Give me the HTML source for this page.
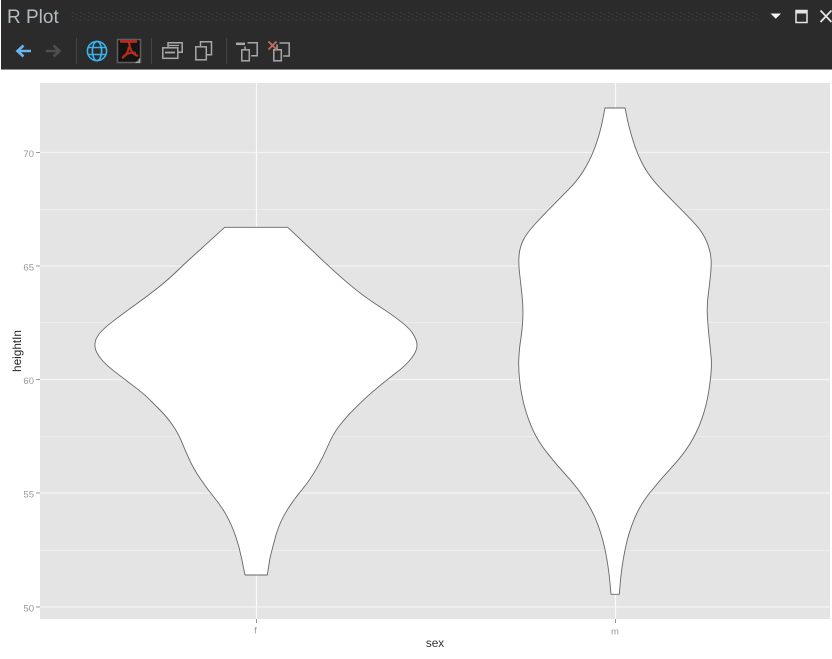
<!DOCTYPE html>
<html><head><meta charset="utf-8"><style>
html,body{margin:0;padding:0;background:#fff;width:832px;height:659px;overflow:hidden}
svg{display:block}
</style></head><body>
<svg width="832" height="659" viewBox="0 0 832 659" xmlns="http://www.w3.org/2000/svg">
<defs>
<pattern id="grip" width="8" height="4" patternUnits="userSpaceOnUse"><rect x="0" y="0" width="1" height="1" fill="#434343"/><rect x="4" y="2" width="1" height="1" fill="#434343"/><rect x="2" y="1" width="1" height="1" fill="#363636"/><rect x="6" y="3" width="1" height="1" fill="#363636"/></pattern>
</defs>
<rect x="0" y="0" width="832" height="659" fill="#fff"/>
<rect x="1" y="0" width="831" height="69" fill="#2b2b2c"/>
<rect x="1" y="69" width="831" height="1" fill="#8c8c8c"/>
<text x="7" y="23" font-family="'Liberation Sans',sans-serif" font-size="19" fill="#b4bcc0">R Plot</text>
<rect x="70" y="12" width="690" height="9" fill="url(#grip)"/>
<path d="M770.5 13.5h10.5l-5.2 5.2z" fill="#f2f2f2"/>
<rect x="796" y="10.5" width="11" height="12" fill="none" stroke="#e4e4e4" stroke-width="1.5"/><rect x="796" y="10" width="11" height="3.5" fill="#e4e4e4"/>
<path d="M820.5 10.5l11 11.5M831.5 10.5l-11 11.5" stroke="#e4e4e4" stroke-width="1.8" fill="none"/>

<path d="M31 51H18M23.5 45.5L17.5 51l6 5.5" fill="none" stroke="#6cb4ee" stroke-width="2.6"/>
<path d="M46 51h13M53.5 45.5l6 5.5-6 5.5" fill="none" stroke="#4e4e4e" stroke-width="2.6"/>
<rect x="76" y="38" width="1" height="26" fill="#454545"/>
<g fill="none" stroke="#3db2ea" stroke-width="1.6"><circle cx="97" cy="51" r="9.6"/><ellipse cx="97" cy="51" rx="4.6" ry="9.6"/><path d="M88 47.5h18M88 54.5h18"/></g>
<rect x="117.500" y="39.500" width="23" height="23" fill="#141414" stroke="#5e5e5e" stroke-width="1.500"/>
<path d="M120 41.500h17" stroke="#c8281c" stroke-width="2.500"/>
<path d="M129 42c1 8 3 12 9 14M129 47c-1 5-3 9-7 11M123 57c4-4 8-5 13-4" fill="none" stroke="#b52c1d" stroke-width="2.200"/>
<path d="M135 63l5-5v5z" fill="#a8a8a8"/><path d="M136.500 61.500l2-2v2z" fill="#333"/>
<rect x="151" y="38" width="1" height="26" fill="#454545"/>
<g fill="none" stroke="#a8a8a8" stroke-width="1.500">
<path d="M168 47v-4.200h14.200v9.500H178"/>
<rect x="162.800" y="47.800" width="15" height="10.500"/><path d="M165 52.500h10" stroke-width="1.800"/><path d="M168 45.500h11" stroke-width="1.300"/>
<rect x="195.800" y="46.800" width="10.500" height="13"/><path d="M200.500 46v-4.300h11v13h-4.500"/>
</g>
<rect x="226" y="38" width="1" height="26" fill="#454545"/>
<g fill="none" stroke="#a8a8a8" stroke-width="1.500">
<rect x="241.800" y="49.800" width="7.500" height="11"/><path d="M236 43.800h9" stroke-width="2.500"/><path d="M247.500 42.800h9.700v13h-6M245 46.500v3"/>
<rect x="273.800" y="49.800" width="7.500" height="11"/><path d="M279.500 43h9.700v13h-6M277 44.500v5"/>
</g>
<path d="M268.500 41.500l8 8M276.500 41.500l-8 8" stroke="#c9695a" stroke-width="1.900" fill="none"/>

<rect x="40" y="83" width="790" height="536" fill="#e4e4e4"/>
<g stroke="#ededed" stroke-width="1"><path d="M40 209.500h790M40 322.500h790M40 436.500h790M40 550.500h790"/></g>
<g stroke="#f3f3f3" stroke-width="1.200"><path d="M40 152.500h790M40 266h790M40 379.500h790M40 493h790M40 607h790"/></g>
<g stroke="#fafafa" stroke-width="1.200"><path d="M256.500 83v536M615.500 83v536"/></g>

<path fill="#fff" stroke="#666" stroke-width="0.900" stroke-linejoin="round" d="M224.700 227.300L183.300 265Q170 278.300 158.300 287.500Q146.700 296.700 135 305Q123.300 313.300 114.200 320.300Q105 327.300 100.800 332Q96.700 336.700 95.500 340.800Q94.300 345 95.500 349.200Q96.700 353.300 100.800 358.600Q105 364 114.200 371.200Q123.300 378.300 133.300 385.800Q143.300 393.300 148.300 398.300Q153.300 403.300 160 410Q166.700 416.700 172.500 425Q178.300 433.300 181.600 441.600Q185 450 189.200 459.200Q193.300 468.300 200 478.300Q206.700 488.300 214.200 497.500Q221.700 506.700 226.700 515.800Q231.700 525 235.500 535.800Q239.300 546.700 241.500 558L245 575L267.300 575L270 558Q272.700 546.700 276.300 534Q280 521.700 286.700 510.800Q293.300 500 301.700 490Q310 480 316.700 468.300Q323.300 456.700 328.300 445Q333.300 433.300 340 425Q346.700 416.700 350 413.300Q353.300 410 360 403.300Q366.700 396.700 376.700 388.300Q386.700 380 395.800 373Q405 366 410 360Q415 354 416.300 349.500Q417.700 345 416.300 340.800Q415 336.700 411.700 332Q408.300 327.300 399.200 320.300Q390 313.300 376.700 304.700Q363.300 296 351.700 286.300Q340 276.700 326.700 264.200L287.700 227.300Z"/>
<path fill="#fff" stroke="#666" stroke-width="0.900" stroke-linejoin="round" d="M605 108L602.500 120.700Q600 133.300 595.800 145Q591.700 156.700 585.800 167Q580 177.300 571.700 186.200Q563.300 195 552.500 205.800Q541.700 216.700 534.200 225Q526.700 233.300 523.300 240Q520 246.700 519.200 254.200Q518.300 261.700 519.500 272.500Q520.700 283.300 522 295Q523.300 306.700 522.800 318.300Q522.300 330 520.800 339Q519.300 348.300 518.800 359Q518.300 370 520 383.300Q521.700 396.700 525 408.300Q528.300 420 533.300 430.800Q538.300 441.700 547.500 453.300Q556.700 465 566.700 475.800Q576.700 486.700 585 499.200Q593.300 511.700 598.300 525.800Q603.300 540 605.800 553.300Q608.300 566.700 609.500 578L611 594.300L619.300 594.300L620.500 580Q621.700 566.700 625 550Q628.300 533.300 634.200 519.200Q640 505 650 492.500Q660 480 670.800 468.300Q681.700 456.700 689.200 445Q696.700 433.300 701.700 419.200Q706.700 405 708.800 390.800Q711 376.700 711.300 368.300Q711.700 360 710.800 354Q710.300 348.300 709.300 339Q708.300 330 707.500 318.300Q706.700 306.700 708 296.700Q709.300 286.700 710.500 275Q711.700 263.300 710.800 256.700Q710 250 706.700 241.700Q703.300 233.300 696.700 225.800Q690 218.300 680 208.300Q670 198.300 660 187.800Q650 177.300 644.200 167Q638.300 156.700 634.200 144.200Q630 131.700 627.500 120L625 108Z"/>

<g stroke="#999" stroke-width="1"><path d="M36 152.500h4M36 266h4M36 379.500h4M36 493h4M36 607h4M256.500 619v4M615.500 619v4"/></g>
<g font-family="'Liberation Sans',sans-serif" font-size="9.500" fill="#999" text-anchor="end">
<text x="34" y="157">70</text><text x="34" y="270.500">65</text><text x="34" y="384">60</text><text x="34" y="497.500">55</text><text x="34" y="611.500">50</text>
</g>
<g font-family="'Liberation Sans',sans-serif" font-size="9.500" fill="#999" text-anchor="middle">
<text x="255.500" y="633.500">f</text><text x="615" y="634.500">m</text>
</g>
<text x="435" y="647" font-family="'Liberation Sans',sans-serif" font-size="11.800" fill="#333" text-anchor="middle">sex</text>
<text transform="translate(21 351) rotate(-90)" font-family="'Liberation Sans',sans-serif" font-size="11.800" fill="#222" text-anchor="middle">heightIn</text>
</svg>
</body></html>
